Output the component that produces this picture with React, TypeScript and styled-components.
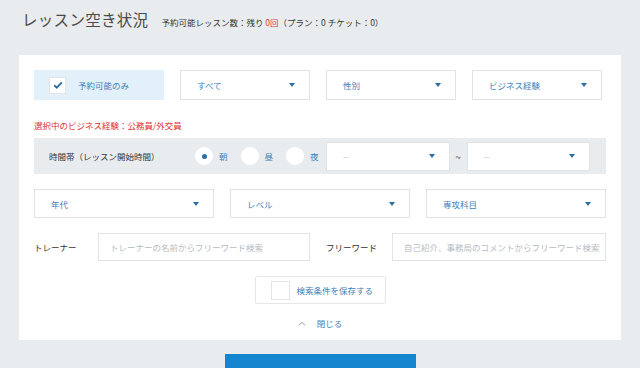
import React from "react";
import styled, { createGlobalStyle } from "styled-components";

const Global = createGlobalStyle`
  html, body { margin: 0; padding: 0; background: #e9ecef; }
  body { font-family: "Noto Sans CJK JP", "Noto Sans", sans-serif; color: #333; }
  * { box-sizing: border-box; }
`;

const Page = styled.div`
  width: 640px;
  height: 368px;
  overflow: hidden;
  background: #e9ecef;
`;

const Header = styled.header`
  display: flex;
  align-items: baseline;
  gap: 13px;
  padding: 8px 22px 0;
  height: 55px;
`;

const Title = styled.h1`
  margin: 0;
  font-size: 15.5px;
  font-weight: 400;
  color: #4a4a4a;
  letter-spacing: 0.3px;
`;

const Quota = styled.span`
  font-size: 8.5px;
  color: #333;
  & em {
    font-style: normal;
    color: #e03b3b;
  }
`;

const Card = styled.section`
  margin: 0 19px;
  background: #fff;
  padding: 15px 15px 0;
  height: 285px;
  display: flex;
  flex-direction: column;
`;

const Row = styled.div<{ $cols: number; $width?: number }>`
  display: grid;
  grid-template-columns: repeat(${(p) => p.$cols}, 1fr);
  gap: 16px;
  width: ${(p) => (p.$width ? `${p.$width}px` : "auto")};
`;

const CheckTile = styled.div`
  height: 30px;
  background: #e2f0f9;
  display: flex;
  align-items: center;
  padding-left: 15px;
  gap: 12px;
  font-size: 8.5px;
  color: #3d7fb8;
`;

const Box = styled.span<{ $size?: number }>`
  width: ${(p) => p.$size ?? 17}px;
  height: ${(p) => p.$size ?? 17}px;
  background: #fff;
  border: 1px solid #e4e4e4;
  display: flex;
  align-items: center;
  justify-content: center;
  flex-shrink: 0;
`;

const Select = styled.div<{ $h?: number; $muted?: boolean }>`
  height: ${(p) => p.$h ?? 30}px;
  background: #fff;
  border: 1px solid #dfe3e6;
  display: flex;
  align-items: center;
  justify-content: space-between;
  padding: 0 14px 0 16px;
  font-size: 8.5px;
  color: ${(p) => (p.$muted ? "#b8c4cc" : "#3d7fb8")};
`;

const Arrow = styled.span`
  width: 0;
  height: 0;
  border-left: 3.5px solid transparent;
  border-right: 3.5px solid transparent;
  border-top: 4px solid #2a6fa8;
`;

const Notice = styled.p`
  margin: 19px 0 7px;
  font-size: 8.5px;
  color: #e02f2f;
  line-height: 12px;
`;

const TimeBand = styled.div`
  height: 36px;
  background: #e9ecef;
  display: flex;
  align-items: center;
  padding: 0 16px 0 15px;
  font-size: 8.5px;
`;

const BandLabel = styled.span`
  width: 146px;
  color: #333;
`;

const Radios = styled.div`
  display: flex;
  gap: 13px;
  width: 131px;
`;

const Radio = styled.label`
  display: flex;
  align-items: center;
  gap: 6px;
  color: #3d7fb8;
`;

const Dot = styled.span<{ $on?: boolean }>`
  width: 18px;
  height: 18px;
  border-radius: 50%;
  background: #fff;
  display: flex;
  align-items: center;
  justify-content: center;
  &::after {
    content: "";
    width: 5px;
    height: 5px;
    border-radius: 50%;
    background: ${(p) => (p.$on ? "#2a6fa8" : "transparent")};
  }
`;

const Range = styled.div`
  flex: 1;
  display: grid;
  grid-template-columns: 1fr 17px 1fr;
  align-items: center;
  & > i {
    font-style: normal;
    text-align: center;
    color: #555;
    font-size: 10px;
  }
`;

const Spacer = styled.div<{ $h: number }>`
  height: ${(p) => p.$h}px;
  flex-shrink: 0;
`;

const SearchRow = styled.div`
  display: grid;
  grid-template-columns: 64px 212px 82px 1fr;
  align-items: center;
`;

const FieldLabel = styled.span<{ $indent?: boolean }>`
  font-size: 8.5px;
  color: #333;
  white-space: nowrap;
  padding-left: ${(p) => (p.$indent ? 16 : 0)}px;
`;

const Input = styled.div`
  height: 28px;
  border: 1px solid #e2e5e8;
  display: flex;
  align-items: center;
  padding-left: 11px;
  font-size: 8.5px;
  color: #b5bcc2;
  white-space: nowrap;
  overflow: hidden;
`;

const SaveButton = styled.div`
  align-self: center;
  width: 131px;
  height: 28px;
  border: 1px solid #e4e7ea;
  border-radius: 2px;
  display: flex;
  align-items: center;
  gap: 7px;
  padding-left: 15px;
  font-size: 8.5px;
  color: #3d7fb8;
`;

const Toggle = styled.div`
  align-self: center;
  display: flex;
  align-items: center;
  gap: 11px;
  margin-top: 13px;
  font-size: 8.5px;
  color: #3d7fb8;
`;

const Submit = styled.div`
  width: 191px;
  height: 20px;
  margin: 14px auto 0;
  background: #1485cf;
`;

const Check = () => (
  <svg width="10" height="8" viewBox="0 0 10 8">
    <path d="M1.2 4.2 L3.8 6.6 L8.8 1.4" fill="none" stroke="#2a6fa8" strokeWidth="1.9" />
  </svg>
);

const ChevronUp = () => (
  <svg width="8" height="5" viewBox="0 0 8 5">
    <path d="M1 4.3 L4 1.2 L7 4.3" fill="none" stroke="#8f99a2" strokeWidth="1" />
  </svg>
);

const App: React.FC = () => (
  <Page>
    <Global />
    <Header>
      <Title>レッスン空き状況</Title>
      <Quota>
        予約可能レッスン数：残り <em>0回</em>（プラン：0 チケット：0）
      </Quota>
    </Header>
    <Card>
      <Row $cols={4} $width={568}>
        <CheckTile>
          <Box>
            <Check />
          </Box>
          予約可能のみ
        </CheckTile>
        <Select>
          すべて
          <Arrow />
        </Select>
        <Select>
          性別
          <Arrow />
        </Select>
        <Select>
          ビジネス経験
          <Arrow />
        </Select>
      </Row>
      <Notice>選択中のビジネス経験：公務員/外交員</Notice>
      <TimeBand>
        <BandLabel>時間帯（レッスン開始時間）</BandLabel>
        <Radios>
          <Radio>
            <Dot $on />朝
          </Radio>
          <Radio>
            <Dot />昼
          </Radio>
          <Radio>
            <Dot />夜
          </Radio>
        </Radios>
        <Range>
          <Select $muted $h={29}>
            --
            <Arrow />
          </Select>
          <i>~</i>
          <Select $muted $h={29}>
            --
            <Arrow />
          </Select>
        </Range>
      </TimeBand>
      <Spacer $h={15} />
      <Row $cols={3}>
        <Select $h={29}>
          年代
          <Arrow />
        </Select>
        <Select $h={29}>
          レベル
          <Arrow />
        </Select>
        <Select $h={29}>
          専攻科目
          <Arrow />
        </Select>
      </Row>
      <Spacer $h={15} />
      <SearchRow>
        <FieldLabel>トレーナー</FieldLabel>
        <Input>トレーナーの名前からフリーワード検索</Input>
        <FieldLabel $indent>フリーワード</FieldLabel>
        <Input>自己紹介、事務局のコメントからフリーワード検索</Input>
      </SearchRow>
      <Spacer $h={15} />
      <SaveButton>
        <Box $size={19} />
        検索条件を保存する
      </SaveButton>
      <Toggle>
        <ChevronUp />
        閉じる
      </Toggle>
    </Card>
    <Submit />
  </Page>
);

export default App;
